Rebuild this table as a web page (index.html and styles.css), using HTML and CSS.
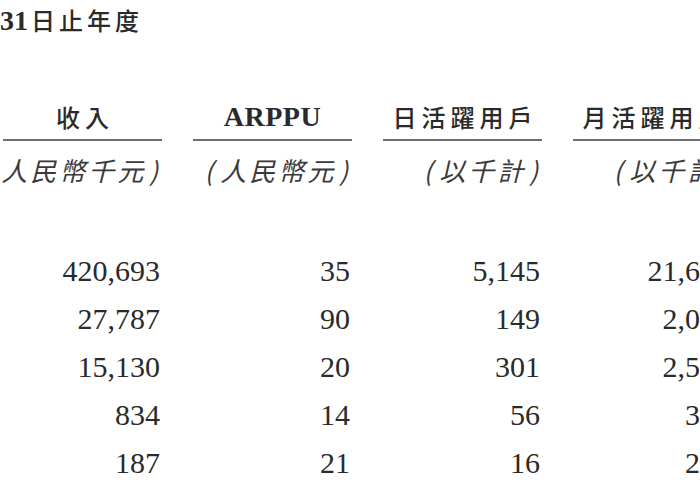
FILE: index.html
```html
<!DOCTYPE html>
<html lang="zh-Hant">
<head>
<meta charset="utf-8">
<title>收入及用戶數據</title>
<link rel="stylesheet" href="styles.css">
</head>
<body>
<div class="page">
  <div class="title"><span class="num">31</span><span class="cjk">日止年度</span></div>
  <div class="table">
    <div class="head"><span class="cjk-head">收入</span></div>
    <div class="head"><span class="latin-head">ARPPU</span></div>
    <div class="head"><span class="cjk-head">日活躍用戶</span></div>
    <div class="head"><span class="cjk-head">月活躍用戶</span></div>

    <div class="sub"><span class="po">(</span>人民幣千元<span class="pc">)</span></div>
    <div class="sub"><span class="po">(</span>人民幣元<span class="pc">)</span></div>
    <div class="sub"><span class="po">(</span>以千計<span class="pc">)</span></div>
    <div class="sub"><span class="po">(</span>以千計<span class="pc">)</span></div>

    <div class="cell first">420,693</div>
    <div class="cell first">35</div>
    <div class="cell first">5,145</div>
    <div class="cell first">21,652</div>

    <div class="cell">27,787</div>
    <div class="cell">90</div>
    <div class="cell">149</div>
    <div class="cell">2,034</div>

    <div class="cell">15,130</div>
    <div class="cell">20</div>
    <div class="cell">301</div>
    <div class="cell">2,517</div>

    <div class="cell">834</div>
    <div class="cell">14</div>
    <div class="cell">56</div>
    <div class="cell">356</div>

    <div class="cell">187</div>
    <div class="cell">21</div>
    <div class="cell">16</div>
    <div class="cell">219</div>
  </div>
</div>
</body>
</html>
```

FILE: styles.css
```css
html, body {
  margin: 0;
  padding: 0;
  background: #ffffff;
}

body {
  width: 700px;
  height: 490px;
  overflow: hidden;
  color: #2a2a2a;
  font-family: "Liberation Serif", "Noto Sans CJK TC", serif;
}

.page {
  width: 760px;
}

.title {
  margin-top: 8px;
  height: 24px;
  line-height: 24px;
  white-space: nowrap;
}

.title .num {
  font-family: "Liberation Serif", serif;
  font-weight: bold;
  font-size: 28px;
  margin-right: 3px;
}

.title .cjk {
  font-family: "Noto Sans CJK TC", sans-serif;
  font-size: 24px;
  font-weight: 500;
  letter-spacing: 4px;
}

.table {
  margin-top: 73px;
  padding-left: 3px;
  display: grid;
  grid-template-columns: repeat(4, 159px);
  column-gap: 31px;
}

.head {
  height: 24px;
  line-height: 24px;
  padding-bottom: 10px;
  border-bottom: 2px solid #6e6e6e;
  text-align: center;
  white-space: nowrap;
}

.cjk-head {
  font-family: "Noto Sans CJK TC", sans-serif;
  font-size: 24px;
  font-weight: 500;
  letter-spacing: 5px;
  padding-left: 5px;
}

.latin-head {
  font-family: "Liberation Serif", serif;
  font-weight: bold;
  font-size: 28px;
  letter-spacing: 0.5px;
}

.sub {
  margin-top: 17px;
  height: 24px;
  line-height: 24px;
  display: flex;
  justify-content: flex-end;
  font-family: "Noto Sans CJK TC", sans-serif;
  font-size: 26px;
  font-style: italic;
  letter-spacing: 3px;
  color: #3a3a3a;
  white-space: nowrap;
  margin-right: 4px;
}

.sub .po {
  margin-right: 4px;
}

.sub .pc {
  margin-left: 3px;
  letter-spacing: 0;
}

.cell {
  font-family: "Liberation Serif", serif;
  font-size: 30px;
  line-height: 48px;
  text-align: right;
  padding-right: 2px;
  color: #2a2a2a;
}

.cell.first {
  margin-top: 65px;
}
```
